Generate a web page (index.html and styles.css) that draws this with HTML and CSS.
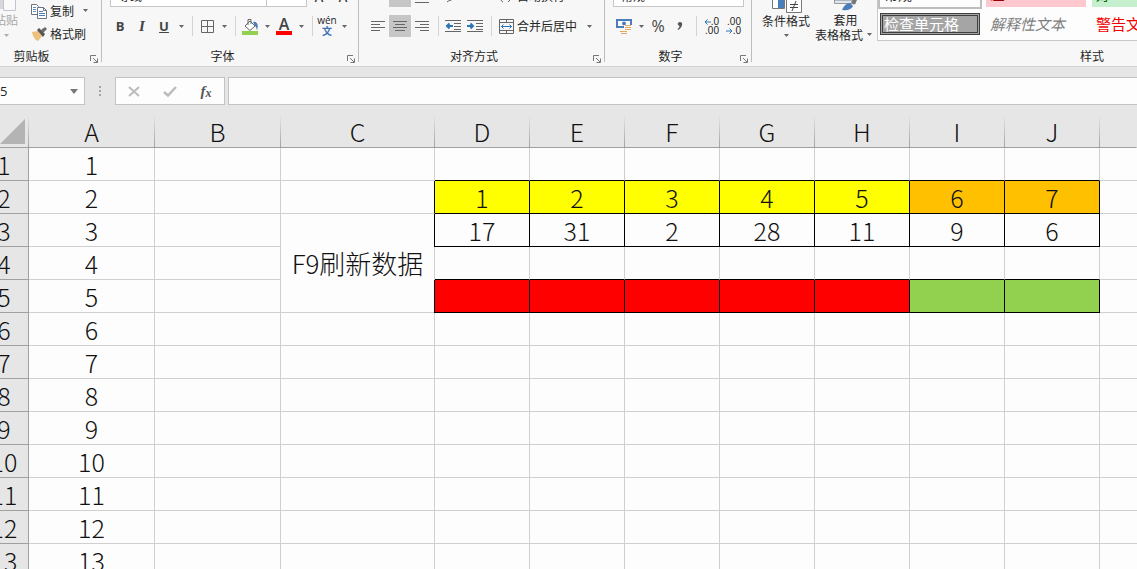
FILE: index.html
```html
<!DOCTYPE html>
<html lang="zh-CN">
<head>
<meta charset="utf-8">
<title>Sheet</title>
<link rel="stylesheet" href="styles.css">
</head>
<body>
<svg class="defs" aria-hidden="true">
  <symbol id="caret" viewBox="0 0 5 3"><path d="M0 0h5L2.500 3z" fill="#666"/></symbol>
  <symbol id="launch" viewBox="0 0 8 8"><path d="M.5 6V.5H6M3 3l4 4M7.500 3.500v4h-4" fill="none" stroke="#777"/></symbol>
</svg>
<header class="ribbon">
  <section class="group clipboard">
    <div class="body clip-body">
      <button class="paste" disabled>
        <svg width="24" height="22" viewBox="0 0 24 22"><path d="M0 0h9v19H0z" fill="#d9d7dc"/><path d="M9.500 4.500h12v16h-12z" fill="#fafafa" stroke="#c4c4cc"/></svg>
        <span>粘贴</span>
        <svg class="caret pale"><use href="#caret"/></svg>
      </button>
      <div class="clip-list">
        <button class="line">
          <svg width="16" height="16" viewBox="0 0 16 16" fill="#fff" stroke="#6b7480"><path d="M.5 1.500h5l2 2v8h-7z"/><path d="M2 4.500h3M2 6.500h3M2 8.500h3" stroke="#5b8ec2"/><path d="M6.500 4.500h6l3 3v8h-9z"/><path d="M12.500 4.500v3h3" fill="none"/><path d="M8 8.500h4M8 10.500h6M8 12.500h6" stroke="#4a80b8"/></svg>
          <span>复制</span><svg class="caret"><use href="#caret"/></svg>
        </button>
        <button class="line">
          <svg width="16" height="16" viewBox="0 0 16 16"><path d="M1 6l6-1 4 5-4 5c-3-1-5-4-6-9z" fill="#edc07c"/><path d="M6 4l2-2 6 6-2 3z" fill="#555"/><path d="M10 4l4-3 2 2-4 4z" fill="#6a6a6a"/></svg>
          <span>格式刷</span>
        </button>
      </div>
    </div>
    <footer class="caption"><span>剪贴板</span><button aria-label="剪贴板"><svg class="launch"><use href="#launch"/></svg></button></footer>
  </section>

  <section class="group font">
    <div class="top"><div class="combo name">等线</div><div class="combo size"></div><span class="glyph">A</span><span class="glyph">A</span></div>
    <div class="tools">
      <button class="tool bold">B</button><button class="tool italic">I</button><button class="tool under">U</button>
      <button class="drop" aria-label="U"><svg class="caret"><use href="#caret"/></svg></button>
      <i class="sep"></i>
      <button class="tool" aria-label="borders"><svg width="13" height="13" fill="none" stroke="#666"><path d="M.5.5h12v12H.5zM6.500 0v13M0 6.500h13"/></svg></button>
      <button class="drop" aria-label="borders"><svg class="caret"><use href="#caret"/></svg></button>
      <i class="sep"></i>
      <button class="tool" aria-label="fill"><svg width="17" height="17" viewBox="0 0 17 17"><path d="M8 3l5 5-5 4.500L3 8z" fill="#fff" stroke="#666"/><path d="M6 7V1.500h3V6" fill="none" stroke="#666"/><path d="M11 4c4-1 6 3 4 8-1-1 0-3-2-4z" fill="#4a7ebb"/><path d="M0 13h16v4H0z" fill="#92d050"/></svg></button>
      <button class="drop" aria-label="fill"><svg class="caret"><use href="#caret"/></svg></button>
      <button class="tool color"><span>A</span></button>
      <button class="drop" aria-label="A"><svg class="caret"><use href="#caret"/></svg></button>
      <i class="sep"></i>
      <button class="tool pinyin"><span>wén</span><b>文</b></button>
      <button class="drop" aria-label="wén"><svg class="caret"><use href="#caret"/></svg></button>
    </div>
    <footer class="caption"><span>字体</span><button aria-label="字体"><svg class="launch"><use href="#launch"/></svg></button></footer>
  </section>

  <section class="group align">
    <div class="top">
      <i class="tool"></i><i class="tool on"></i>
      <i class="tool"><svg width="14" height="14" stroke="#666"><path d="M0 2.500h14M2 6.500h10M0 13.500h14"/></svg></i>
      <i class="space"></i><i class="tool"><svg width="14" height="14" fill="none" stroke="#666"><path d="M1 13l6-4M3 9l2 3"/></svg></i><i class="space wide"></i>
      <i class="tool"><svg width="14" height="14" fill="none" stroke="#666"><path d="M4 8q-4 3 0 5M9 13l3-3"/></svg></i><span>自动换行</span>
    </div>
    <div class="tools">
      <button class="tool" aria-label="left"><svg width="14" height="12" stroke="#666"><path d="M0 1.500h14M0 4.500h9M0 7.500h14M0 10.500h9"/></svg></button>
      <button class="tool on" aria-label="center"><svg width="14" height="12" stroke="#666"><path d="M0 1.500h14M2 4.500h10M0 7.500h14M2 10.500h10"/></svg></button>
      <button class="tool" aria-label="right"><svg width="14" height="12" stroke="#666"><path d="M0 1.500h14M5 4.500h9M0 7.500h14M5 10.500h9"/></svg></button>
      <i class="sep"></i>
      <button class="tool" aria-label="outdent"><svg width="16" height="14" stroke="#666" fill="none"><path d="M0 1.500h16M9 4.500h7M9 7.500h7M9 10.500h7M0 12.500h16"/><path d="M2 7h6M4.500 4.500L2 7l2.500 2.500" stroke="#2e75b6" stroke-width="2"/></svg></button>
      <button class="tool" aria-label="indent"><svg width="16" height="14" stroke="#666" fill="none"><path d="M0 1.500h16M9 4.500h7M9 7.500h7M9 10.500h7M0 12.500h16"/><path d="M0 7h6M3.500 4.500L6 7 3.500 9.500" stroke="#2e75b6" stroke-width="2"/></svg></button>
      <i class="sep"></i>
      <button class="merge"><i class="tool"><svg width="15" height="15" fill="none" stroke="#666"><path d="M.5.5h14v14H.5zM0 3.500h15M0 11.500h15M7.500 0v4M7.500 11v4"/><path d="M2 7.500h11M4.500 5.500l-2 2 2 2M10.500 5.500l2 2-2 2" stroke="#2e75b6"/></svg></i><span>合并后居中</span></button>
      <button class="drop merge-drop" aria-label="合并后居中"><svg class="caret"><use href="#caret"/></svg></button>
    </div>
    <footer class="caption"><span>对齐方式</span><button aria-label="对齐方式"><svg class="launch"><use href="#launch"/></svg></button></footer>
  </section>

  <section class="group number">
    <div class="top"><div class="combo format">常规</div></div>
    <div class="tools">
      <button class="tool" aria-label="currency"><svg width="17" height="17" viewBox="0 0 17 17"><path d="M1 2h14v7H1z" fill="#fff" stroke="#4a7ebb" stroke-width="2"/><circle cx="8" cy="5.500" r="2" fill="#4a7ebb"/><path d="M8 7h9v10H4v-5h4z" fill="#f6f7f6"/><path d="M9 7.500h6M9 9.500h6M9 11.500h6M4 13.500h7M5 15.500h6" stroke="#dfa95f"/></svg></button>
      <button class="drop" aria-label="currency"><svg class="caret"><use href="#caret"/></svg></button>
      <button class="tool percent">%</button>
      <button class="tool" aria-label="comma"><svg width="6" height="9"><path d="M1 1q2-2 4 0 1 4-4 7l-.5-1q2-1 2-3Q0 3 1 1z" fill="#555"/></svg></button>
      <i class="sep"></i>
      <button class="tool decimal"><span><svg width="7" height="6" fill="none" stroke="#2e75b6"><path d="M7 3H1M3.500 .5L1 3l2.500 2.500"/></svg>.0</span><span>.00</span></button>
      <button class="tool decimal"><span>.00</span><span><svg width="7" height="6" fill="none" stroke="#2e75b6"><path d="M0 3h6M3.500 .5L6 3 3.500 5.500"/></svg>.0</span></button>
    </div>
    <footer class="caption"><span>数字</span><button aria-label="数字"><svg class="launch"><use href="#launch"/></svg></button></footer>
  </section>

  <section class="group styles">
    <div class="body">
      <button class="big cond">
        <svg width="32" height="30" viewBox="0 0 32 30"><path d="M2.500.5h12v25h-12z" fill="#fff" stroke="#777"/><path d="M8 0h6v25H8z" fill="#4a7ebb"/><path d="M16.500 14.500h15v15h-15z" fill="#fff" stroke="#777"/><path d="M20 21.500h8M20 24.500h8M26 18l-4 10" stroke="#444"/></svg>
        <span>条件格式</span><svg class="caret"><use href="#caret"/></svg>
      </button>
      <button class="big fmt">
        <svg width="28" height="30" viewBox="0 0 28 30"><path d="M2.500.5h21v21h-21z" fill="#dce6f2" stroke="#999"/><path d="M2 18h21" stroke="#888"/><path d="M10 28q3-7 8-7l3 3q-2 5-11 4z" fill="#4a7ebb"/><path d="M19 20l6-7 2 2-5 8z" fill="#777"/></svg>
        <span>套用</span><span class="second">表格格式<svg class="caret"><use href="#caret"/></svg></span>
      </button>
      <div class="gallery">
        <button class="swatch normal">常规</button><button class="swatch bad">差</button><button class="swatch good">好</button>
        <button class="swatch check">检查单元格</button><button class="swatch explain">解释性文本</button><button class="swatch warn">警告文本</button>
      </div>
    </div>
    <footer class="caption"><span>样式</span></footer>
  </section>
</header>

<div class="formula-bar">
  <div class="name-box"><input aria-label="cell" value="5"><button class="drop" aria-label="cells"><svg width="8" height="5"><path d="M0 0h8L4 5z" fill="#777"/></svg></button></div>
  <svg class="grip" width="2" height="11" fill="#a5a5a5"><path d="M0 0h2v2H0zM0 4h2v2H0zM0 8h2v2H0z"/></svg>
  <div class="entry">
    <button aria-label="cancel"><svg width="12" height="11" fill="none" stroke="#bcbcbc" stroke-width="2"><path d="M1 1l10 9M11 1L1 10"/></svg></button>
    <button aria-label="enter"><svg width="14" height="11" fill="none" stroke="#bcbcbc" stroke-width="2.500"><path d="M1 6l4 3.500L13 1"/></svg></button>
    <button class="fx" aria-label="function"><i>f</i><i class="sub">x</i></button>
  </div>
  <input class="formula" aria-label="formula">
</div>

<main class="sheet">
<table>
  <colgroup><col class="c-head"><col class="c-mid"><col class="c-mid"><col class="c-wide"><col class="c-num" span="7"><col></colgroup>
  <thead><tr><th class="corner"><svg width="25" height="25"><path d="M25 0v25H0z" fill="#b4b4b4"/></svg></th><th>A</th><th>B</th><th>C</th><th>D</th><th>E</th><th>F</th><th>G</th><th>H</th><th>I</th><th>J</th><th></th></tr></thead>
  <tbody>
  <tr class="above"><th>1</th><td>1</td><td></td><td></td><td></td><td></td><td></td><td></td><td></td><td></td><td></td><td></td></tr>
  <tr class="boxed"><th>2</th><td>2</td><td></td><td class="before"></td><td class="yellow">1</td><td class="yellow">2</td><td class="yellow">3</td><td class="yellow">4</td><td class="yellow">5</td><td class="orange">6</td><td class="orange">7</td><td></td></tr>
  <tr class="boxed"><th>3</th><td>3</td><td></td><td class="note" rowspan="3">F9刷新数据</td><td class="box">17</td><td class="box">31</td><td class="box">2</td><td class="box">28</td><td class="box">11</td><td class="box">9</td><td class="box">6</td><td></td></tr>
  <tr><th>4</th><td>4</td><td></td><td class="lid"></td><td class="lid"></td><td class="lid"></td><td class="lid"></td><td class="lid"></td><td class="lid"></td><td class="lid"></td><td></td></tr>
  <tr><th>5</th><td>5</td><td></td><td class="red first"></td><td class="red"></td><td class="red"></td><td class="red"></td><td class="red"></td><td class="green"></td><td class="green"></td><td></td></tr>
  <tr><th>6</th><td>6</td><td></td><td></td><td></td><td></td><td></td><td></td><td></td><td></td><td></td><td></td></tr>
  <tr><th>7</th><td>7</td><td></td><td></td><td></td><td></td><td></td><td></td><td></td><td></td><td></td><td></td></tr>
  <tr><th>8</th><td>8</td><td></td><td></td><td></td><td></td><td></td><td></td><td></td><td></td><td></td><td></td></tr>
  <tr><th>9</th><td>9</td><td></td><td></td><td></td><td></td><td></td><td></td><td></td><td></td><td></td><td></td></tr>
  <tr><th>10</th><td>10</td><td></td><td></td><td></td><td></td><td></td><td></td><td></td><td></td><td></td><td></td></tr>
  <tr><th>11</th><td>11</td><td></td><td></td><td></td><td></td><td></td><td></td><td></td><td></td><td></td><td></td></tr>
  <tr><th>12</th><td>12</td><td></td><td></td><td></td><td></td><td></td><td></td><td></td><td></td><td></td><td></td></tr>
  <tr><th>13</th><td>13</td><td></td><td></td><td></td><td></td><td></td><td></td><td></td><td></td><td></td><td></td></tr>
  </tbody>
</table>
</main>
</body>
</html>
```
FILE: styles.css
```css
* { box-sizing: border-box; }
body {
  margin: 0;
  height: 100vh;
  overflow: hidden;
  display: flex;
  flex-direction: column;
  background: #e6e6e6;
  color: #262626;
  font: 12px/16px "Noto Sans CJK SC", sans-serif;
}
button, input { font: inherit; color: inherit; background: none; border: 0; padding: 0; margin: 0; }
svg { display: block; flex: none; }
.defs { display: none; }
.caret { width: 5px; height: 3px; }
.pale { opacity: .5; }
.launch { width: 8px; height: 8px; }

/* Ribbon */
.ribbon {
  flex: none;
  display: flex;
  height: 67px;
  margin-left: -23px;
  overflow: hidden;
  background: #f6f7f6;
  border-bottom: 1px solid #d2d2d2;
}
.group {
  flex: none;
  position: relative;
  display: flex;
  flex-direction: column;
  justify-content: flex-end;
}
.group:not(.styles)::after {
  content: "";
  position: absolute;
  right: 0;
  top: 0;
  bottom: 4px;
  border-right: 1px solid #bdbdbd;
}
.clipboard { width: 125px; }
.font { width: 257px; }
.align { width: 246px; }
.number { width: 147px; }
.styles { width: 696px; }
.caption { flex: none; display: flex; align-items: center; height: 21px; }
.caption span { flex: 1; text-align: center; }
.caption button { width: 16px; padding: 6px 0 0 4px; }
.styles .caption { padding-right: 16px; }
.body { flex: none; display: flex; align-items: flex-end; }

.paste { width: 53px; display: flex; flex-direction: column; align-items: center; color: #a8a8a8; padding: 0 0 8px 5px; }
.paste .caret { margin-top: 6px; }
.clip-list { display: flex; flex-direction: column; padding-left: 1px; }
.line { display: flex; align-items: center; gap: 3px; height: 23px; }
.line .caret { margin-left: 6px; }

.top { flex: none; display: flex; align-items: center; height: 22px; padding-left: 8px; }
.combo { height: 22px; padding: 2px 7px; background: #fff; border: 1px solid #c6c6c6; }
.name { width: 157px; }
.size { width: 40px; border-left: 0; }
.format { width: 131px; }
.glyph { width: 24px; text-align: center; font-size: 14px; line-height: 18px; }
.space { width: 9px; }
.wide { width: 31px; }
.tools { flex: none; display: flex; align-items: center; height: 38px; padding-left: 8px; }
.font .tools { padding-left: 7px; }
.tool { flex: none; width: 22px; height: 22px; display: flex; align-items: center; justify-content: center; }
.on { background: #c6c6c6; }
.drop { width: 12px; height: 22px; display: flex; align-items: center; justify-content: center; }
.sep { width: 1px; height: 20px; margin: 0 3px 0 5px; background: #d4d4d4; }
.bold, .italic, .under, .color { font: bold 13px/16px "Open Sans", sans-serif; color: #444; }
.italic { font-family: "Liberation Serif", serif; font-style: italic; font-size: 15px; }
.under { text-decoration: underline; }
.color span { width: 16px; font-size: 16px; line-height: 13px; border-bottom: 4px solid #f00; font-weight: 600; }
.pinyin { flex-direction: column; font-size: 10px; line-height: 9px; }
.pinyin span { font-family: "Open Sans", sans-serif; }
.pinyin b { color: #4472b8; line-height: 11px; }
.merge { display: flex; align-items: center; }
.merge-drop { margin-left: 6px; }
.percent { font: 16px/20px "Open Sans", sans-serif; color: #444; }
.decimal { flex-direction: column; align-items: stretch; font: 10px/9px "Liberation Sans", sans-serif; padding: 0 3px; }
.decimal span { display: flex; align-items: center; justify-content: flex-end; }

.big { display: flex; flex-direction: column; align-items: center; line-height: 15px; padding-bottom: 3px; white-space: nowrap; }
.cond { width: 62px; padding: 0 0 8px 6px; }
.cond .caret { margin-top: 6px; }
.fmt { width: 63px; }
.second { display: flex; align-items: center; gap: 4px; margin-right: 4px; }
.gallery {
  flex: 1;
  display: grid;
  grid-template-columns: repeat(3, 100px);
  gap: 6px;
  margin-bottom: 4px;
  padding: 2px 2px 5px;
  background: #fdfdfd;
  border: 1px solid #c8c8c8;
}
.swatch { height: 22px; padding: 0 4px; text-align: left; font-size: 15px; line-height: 18px; white-space: nowrap; }
.normal { outline: 2px solid #bdbdbd; font-size: 14px; }
.normal, .bad, .good { padding-bottom: 4px; }
.bad { background: #ffc7ce; color: #9c0006; }
.good { background: #c6efce; color: #006100; }
.check { background: #a5a5a5; color: #fff; border: 3px double #3f3f3f; padding: 0 1px; line-height: 14px; }
.explain { color: #7f7f7f; font-style: italic; }
.warn { color: #f00000; }

/* Formula bar */
.formula-bar { flex: none; display: flex; align-items: center; height: 48px; }
.name-box, .entry, .formula { height: 28px; background: #fdfdfd; border: 1px solid #c3c3c3; }
.name-box { width: 85px; display: flex; border-left: 0; }
.name-box input { flex: 1; min-width: 0; font: 13px/16px "Open Sans", sans-serif; }
.name-box .drop { width: 20px; height: 26px; }
.grip { margin: 0 14px; }
.entry { width: 110px; display: flex; margin-right: 3px; }
.entry button { flex: 1; display: flex; align-items: center; justify-content: center; }
.fx { font: bold 15px/20px "Liberation Serif", serif; color: #555; }
.fx .sub { font-size: 12px; line-height: 12px; padding-top: 4px; }
.formula { flex: 1; min-width: 0; border-right: 0; }

/* Grid */
.sheet { flex: 1; min-height: 0; overflow: hidden; }
table {
  width: calc(100% + 20px);
  margin-left: -20px;
  table-layout: fixed;
  border-collapse: separate;
  border-spacing: 0;
  background: #fdfdfd;
  color: #111;
  font-size: 25px;
  line-height: 30px;
  font-weight: 300;
}
.c-head { width: 49px; }
.c-mid { width: 126px; }
.c-wide { width: 154px; }
.c-num { width: 95px; }
tr { height: 33px; }
th, td { height: 33px; padding: 0; text-align: center; font-weight: 300; border: 0 solid #d0d0d0; border-width: 0 1px 1px 0; white-space: nowrap; }
th { background: #e6e6e6; border-color: #a0a0a0; }
thead th { border-right-color: transparent; background: linear-gradient(#e6e6e6, #a0a0a0) right / 1px 100% no-repeat border-box, #e6e6e6; }
thead th:last-child { background: #e6e6e6; }
td:last-child { border-right: 0; }
thead .corner svg { margin-left: 20px; }
.above td:nth-child(n+5):nth-child(-n+11) { border-bottom-color: #000; }
.yellow, .orange, .box, .red, .green { border-color: #000; }
.lid { border-bottom-color: #000; }
.yellow { background: #ff0; }
.orange { background: #ffc000; }
.red { background: #f00; }
.green { background: #92d050; }
.before { border-right-color: #000; }
.first, .boxed .box:nth-child(5) { box-shadow: -1px 0 #000; }
.note { font-size: 26px; }
```
